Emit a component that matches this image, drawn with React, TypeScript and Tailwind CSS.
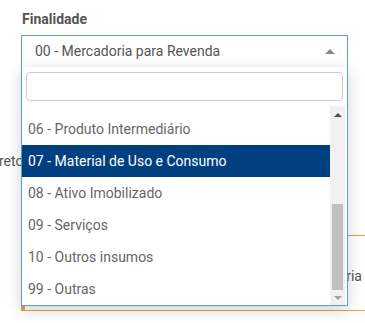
import React from 'react';

const OPTIONS = [
  '05 - Produto em Processo',
  '06 - Produto Intermediário',
  '07 - Material de Uso e Consumo',
  '08 - Ativo Imobilizado',
  '09 - Serviços',
  '10 - Outros insumos',
  '99 - Outras',
];

const SELECTED = '07 - Material de Uso e Consumo';

function Dropdown() {
  return (
    <div className="absolute left-[21px] top-[67px] w-[327px] h-[239px] border-x border-b border-[#5b9ee0] bg-white shadow-[0_4px_14px_rgba(0,0,0,0.18)]">
      <div className="px-1 pt-[5px] pb-[5px]">
        <div className="h-[29px] rounded-[4px] border border-[#cccccc] bg-white" />
      </div>
      <div className="flex h-[199px] pr-[2px]">
        <div className="flex flex-1 flex-col justify-end overflow-hidden">
          {OPTIONS.map((o) => (
            <div
              key={o}
              className={
                o === SELECTED
                  ? 'h-8 shrink-0 flex items-center pl-[6px] bg-[#004080] text-white'
                  : 'h-8 shrink-0 flex items-center pl-[6px] text-[#666666]'
              }
            >
              {o}
            </div>
          ))}
        </div>
        <div className="flex w-[15px] flex-col bg-[#f1f1f1]">
          <div className="flex h-[17px] items-center justify-center">
            <div className="h-0 w-0 border-x-[4px] border-b-[4px] border-x-transparent border-b-[#505050]" />
          </div>
          <div className="flex-1 flex flex-col justify-end px-[2px]">
            <div className="h-[86px] bg-[#c1c1c1]" />
          </div>
          <div className="flex h-[15px] items-center justify-center">
            <div className="h-0 w-0 border-x-[4px] border-t-[4px] border-x-transparent border-t-[#a3a3a3]" />
          </div>
        </div>
      </div>
    </div>
  );
}

export default function App() {
  return (
    <div
      className="relative h-[323px] w-[365px] overflow-hidden bg-white text-[14px] text-[#555555]"
      style={{ fontFamily: 'Roboto, "Noto Sans", sans-serif' }}
    >
      <div className="pl-[22px] pt-[9px] font-bold leading-[20px] text-[#555555]">Finalidade</div>
      <div className="ml-[21px] mt-[6px] flex h-[32px] w-[327px] items-center justify-between border-x border-t border-[#5b9ee0] pl-[13px] pr-[12px]">
        <span className="text-[#555555]">00 - Mercadoria para Revenda</span>
        <div className="h-0 w-0 border-x-[5px] border-b-[5px] border-x-transparent border-b-[#888888]" />
      </div>
      <div className="mt-[84px] -ml-[1px] leading-[20px]">reto</div>
      <div className="ml-[21px] mt-[64px] flex h-[76px] items-center justify-end border-y border-l-4 border-[#e5a142] pt-[6px]">
        <span className="mr-[3px]">Mercadoria</span>
      </div>
      <Dropdown />
    </div>
  );
}
